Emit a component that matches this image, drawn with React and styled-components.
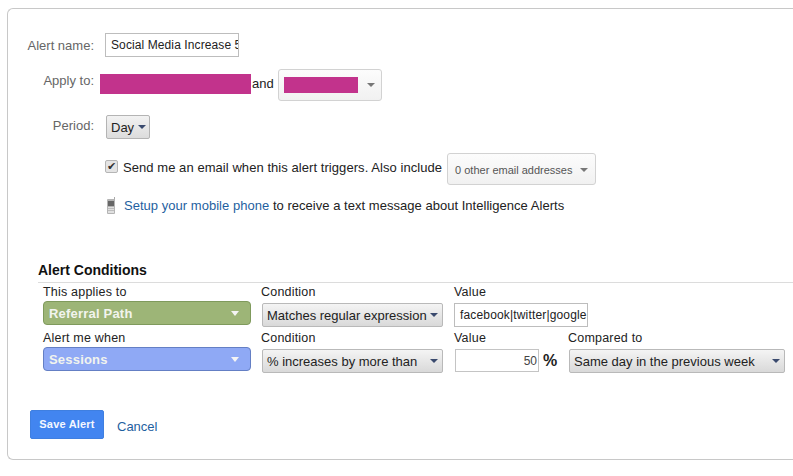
import React from 'react';
import styled, { createGlobalStyle } from 'styled-components';

const GlobalStyle = createGlobalStyle`
  html, body {
    margin: 0;
    padding: 0;
    background: #fff;
    overflow: hidden;
  }
  body {
    font-family: "Liberation Sans", Arial, sans-serif;
    font-size: 13px;
    color: #222;
  }
`;

const conditionRows = [
  {
    metricLabel: 'This applies to',
    metric: 'Referral Path',
    tone: 'green',
    condition: 'Matches regular expression',
  },
  {
    metricLabel: 'Alert me when',
    metric: 'Sessions',
    tone: 'blue',
    condition: '% increases by more than',
  },
];

function MobileIcon() {
  return (
    <svg width="10" height="17" viewBox="0 0 10 17">
      <rect x="8" y="0" width="1" height="3" fill="#aaa" />
      <rect x="1" y="2" width="8" height="15" rx="1" fill="#b4b4b4" />
      <rect x="2" y="4" width="6" height="5" fill="#666" />
      <rect x="2" y="10" width="6" height="6" fill="#e0e0e0" />
      <path d="M3 11v4M5 11v4M7 11v4" stroke="#999" strokeWidth="1" strokeDasharray="1 1" />
    </svg>
  );
}

function App() {
  return (
    <>
      <GlobalStyle />
      <Card>
        <NameRow>
          <Label>Alert name:</Label>
          <TextBox $width={134}>Social Media Increase 5</TextBox>
        </NameRow>

        <ApplyRow>
          <Label>Apply to:</Label>
          <Redacted $width={151} $height={20} />
          <And>and</And>
          <GreySelect>
            <Redacted $width={74} $height={16} />
            <Caret />
          </GreySelect>
        </ApplyRow>

        <PeriodRow>
          <Label>Period:</Label>
          <DayButton>
            Day
            <Caret $dark />
          </DayButton>
        </PeriodRow>

        <EmailRow>
          <Check>✔</Check>
          <EmailText>Send me an email when this alert triggers. Also include</EmailText>
          <EmailSelect>
            0 other email addresses
            <Caret />
          </EmailSelect>
        </EmailRow>

        <PhoneRow>
          <MobileIcon />
          <PhoneText>
            <Link>Setup your mobile phone</Link> to receive a text message about Intelligence Alerts
          </PhoneText>
        </PhoneRow>

        <SectionTitle>Alert Conditions</SectionTitle>
        <Conditions>
          {conditionRows.map((row, i) => (
            <React.Fragment key={row.metric}>
              <ColLabel>{row.metricLabel}</ColLabel>
              <ColLabel>Condition</ColLabel>
              <ColLabel>Value</ColLabel>
              <ColLabel>{i === 1 ? 'Compared to' : ''}</ColLabel>

              <MetricSelect $tone={row.tone}>
                {row.metric}
                <WhiteCaret />
              </MetricSelect>
              <ConditionSelect>
                {row.condition}
                <Caret $dark />
              </ConditionSelect>
              {i === 0 ? (
                <ValueBox $width={134}>facebook|twitter|google</ValueBox>
              ) : (
                <ValueCell>
                  <NumberBox>50</NumberBox>
                  <Percent>%</Percent>
                </ValueCell>
              )}
              {i === 1 ? (
                <CompareSelect>
                  Same day in the previous week
                  <Caret $dark />
                </CompareSelect>
              ) : (
                <span />
              )}
            </React.Fragment>
          ))}
        </Conditions>

        <Actions>
          <SaveButton>Save Alert</SaveButton>
          <CancelLink>Cancel</CancelLink>
        </Actions>
      </Card>
    </>
  );
}

export default App;

const Card = styled.div`
  box-sizing: border-box;
  height: 452px;
  margin: 8px 0 0 7px;
  padding: 24px 0 0 0;
  border: 1px solid #c8c8c8;
  border-right: 0;
  border-radius: 6px 0 0 6px;
`;

const NameRow = styled.div`
  display: flex;
  align-items: center;
  height: 24px;
`;

const Label = styled.div`
  width: 86px;
  flex: none;
  text-align: right;
  color: #666;
  font-size: 13px;
`;

const TextBox = styled.div`
  box-sizing: border-box;
  width: ${(p) => p.$width}px;
  height: 24px;
  padding: 0 0 0 5px;
  border: 1px solid #bdbdbd;
  background: #fff;
  font-size: 12px;
  line-height: 22px;
  letter-spacing: 0.1px;
  white-space: nowrap;
  overflow: hidden;
  ${NameRow} & {
    margin-left: 11px;
  }
`;

const ValueBox = styled(TextBox)`
  margin-top: 2px;
  letter-spacing: 0.16px;
`;

const ApplyRow = styled.div`
  display: flex;
  align-items: flex-start;
  margin-top: 12px;
  height: 32px;
  ${Label} {
    padding-top: 4px;
  }
`;

const Redacted = styled.div`
  width: ${(p) => p.$width}px;
  height: ${(p) => p.$height}px;
  flex: none;
  background: #c2338c;
  ${ApplyRow} > & {
    margin: 5px 0 0 6px;
  }
`;

const And = styled.div`
  margin: 7px 0 0 1px;
  width: 26px;
  font-size: 13px;
`;

const Caret = styled.span`
  flex: none;
  width: 0;
  height: 0;
  border-left: 4px solid transparent;
  border-right: 4px solid transparent;
  border-top: 4px solid ${(p) => (p.$dark ? '#3a4a6e' : '#777')};
`;

const WhiteCaret = styled(Caret)`
  border-left-width: 4.5px;
  border-right-width: 4.5px;
  border-top: 5px solid #f4f4f4;
`;

const GreySelect = styled.div`
  box-sizing: border-box;
  width: 104px;
  height: 32px;
  display: flex;
  align-items: center;
  justify-content: space-between;
  padding: 0 6px 0 5px;
  border: 1px solid #d2d2d2;
  border-radius: 3px;
  background: linear-gradient(#fcfcfc, #f1f1f1);
`;

const PeriodRow = styled.div`
  display: flex;
  align-items: flex-start;
  margin-top: 14px;
  ${Label} {
    padding-top: 3px;
  }
`;

const DayButton = styled.div`
  box-sizing: border-box;
  width: 44px;
  height: 24px;
  margin-left: 12px;
  display: flex;
  align-items: center;
  gap: 4px;
  padding-left: 4px;
  border: 1px solid #b4b4b4;
  border-radius: 2px;
  background: linear-gradient(#f2f2f2, #dcdcdc);
  font-size: 13px;
`;

const EmailRow = styled.div`
  display: flex;
  align-items: center;
  height: 32px;
  margin: 14px 0 0 97px;
`;

const Check = styled.span`
  box-sizing: border-box;
  width: 13px;
  height: 13px;
  margin: -6px 5px 0 0;
  border: 1px solid #b5b5b5;
  border-radius: 2px;
  background: #e4e4e4;
  color: #333;
  font: 11px/11px "DejaVu Sans", sans-serif;
  text-align: center;
`;

const EmailText = styled.div`
  margin-top: -4px;
  font-size: 13px;
  letter-spacing: 0.06px;
  white-space: nowrap;
`;

const EmailSelect = styled(GreySelect)`
  width: 149px;
  margin-left: 5px;
  padding: 2px 7px 0 7px;
  color: #555;
  font-size: 11px;
  white-space: nowrap;
`;

const PhoneRow = styled.div`
  display: flex;
  align-items: center;
  gap: 8px;
  margin: 11px 0 0 98px;
  height: 18px;
`;

const PhoneText = styled.div`
  font-size: 13px;
  letter-spacing: 0.03px;
  white-space: nowrap;
`;

const Link = styled.span`
  color: #1f5f9f;
  font-size: 13px;
`;

const SectionTitle = styled.div`
  margin: 47px 0 0 30px;
  height: 21px;
  font-size: 14px;
  font-weight: bold;
  line-height: 18px;
  color: #111;
`;

const Conditions = styled.div`
  margin-left: 30px;
  padding: 1px 0 0 5px;
  border-top: 1px solid #dcdcdc;
  display: grid;
  grid-template-columns: 218px 193px 114px 1fr;
  grid-template-rows: 17px 29px 17px 29px;
  align-items: start;
`;

const ColLabel = styled.div`
  font-size: 12.5px;
  line-height: 17px;
  letter-spacing: 0.2px;
  white-space: nowrap;
`;

const tones = {
  green: { bg: '#9db577', border: '#7f9a5c' },
  blue: { bg: '#8fa9f5', border: '#647fc4' },
};

const MetricSelect = styled.div`
  box-sizing: border-box;
  width: 208px;
  height: 24px;
  display: flex;
  align-items: center;
  justify-content: space-between;
  padding: 0 11px 0 5px;
  border: 1px solid ${(p) => tones[p.$tone].border};
  border-radius: 4px;
  background: ${(p) => tones[p.$tone].bg};
  color: #f2f4ee;
  font-size: 13px;
  font-weight: bold;
  letter-spacing: 0.2px;
`;

const ConditionSelect = styled.div`
  box-sizing: border-box;
  width: 181px;
  height: 24px;
  margin: 2px 0 0 1px;
  display: flex;
  align-items: center;
  justify-content: space-between;
  padding: 0 4px 0 4px;
  border: 1px solid #b9b9b9;
  border-radius: 2px;
  background: linear-gradient(#f4f4f4, #d9d9d9);
  font-size: 13px;
  white-space: nowrap;
`;

const CompareSelect = styled(ConditionSelect)`
  width: 216px;
`;

const ValueCell = styled.div`
  display: flex;
  align-items: center;
  margin: 2px 0 0 1px;
`;

const NumberBox = styled.div`
  box-sizing: border-box;
  width: 84px;
  height: 23px;
  padding-right: 1px;
  border: 1px solid #c4c4c4;
  text-align: right;
  font-size: 12px;
  line-height: 22px;
  color: #444;
`;

const Percent = styled.span`
  margin-left: 4px;
  font-size: 16px;
  font-weight: bold;
`;

const Actions = styled.div`
  display: flex;
  align-items: center;
  gap: 13px;
  margin: 34px 0 0 22px;
`;

const SaveButton = styled.div`
  box-sizing: border-box;
  width: 74px;
  height: 29px;
  border: 1px solid #3f7fe0;
  border-radius: 2px;
  background: #4285f0;
  color: #f4f7ff;
  font-size: 11px;
  font-weight: bold;
  letter-spacing: 0.2px;
  line-height: 26px;
  text-align: center;
`;

const CancelLink = styled(Link)`
  margin-top: 3px;
`;
